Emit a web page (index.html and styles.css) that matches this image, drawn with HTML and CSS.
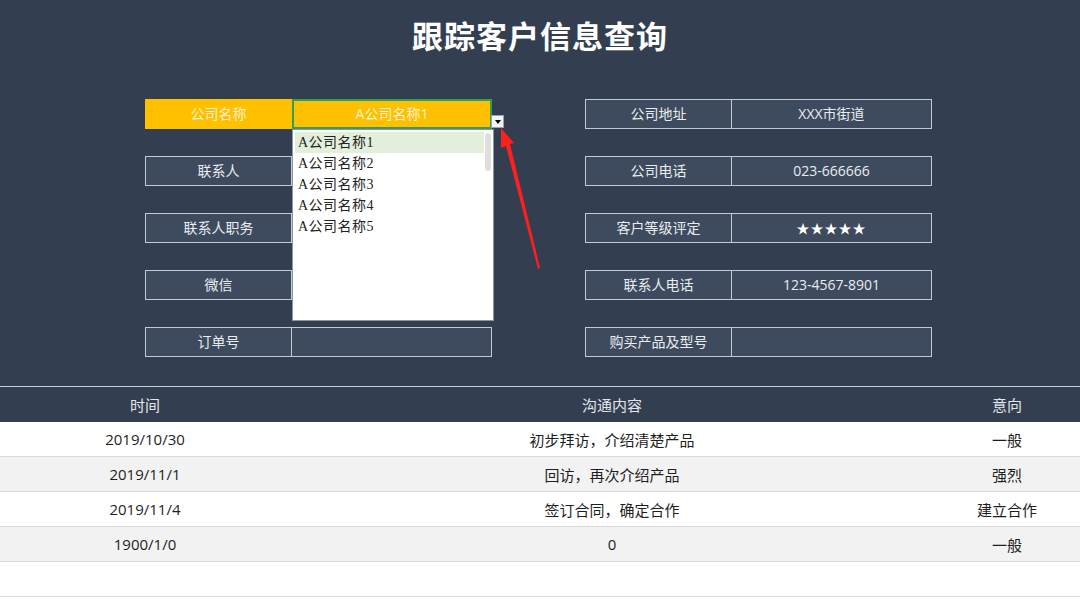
FILE: index.html
```html
<!DOCTYPE html>
<html lang="zh">
<head>
    <meta charset="UTF-8">
    <title>跟踪客户信息查询</title>
    <link rel="stylesheet" href="styles.css">
</head>
<body>
    <div class="top">
        <h1>跟踪客户信息查询</h1>
        <div class="form">
            <div class="group">
                <div class="row active">
                    <div class="label">公司名称</div>
                    <div class="value selected">A公司名称1</div>
                    <div class="drop-btn"></div>
                    <div class="dropdown">
                        <div class="item hl">A公司名称1</div>
                        <div class="item">A公司名称2</div>
                        <div class="item">A公司名称3</div>
                        <div class="item">A公司名称4</div>
                        <div class="item">A公司名称5</div>
                        <div class="scroll"></div>
                    </div>
                </div>
                <div class="row"><div class="label">联系人</div><div class="value"></div></div>
                <div class="row"><div class="label">联系人职务</div><div class="value"></div></div>
                <div class="row"><div class="label">微信</div><div class="value"></div></div>
                <div class="row"><div class="label">订单号</div><div class="value"></div></div>
            </div>
            <div class="group">
                <div class="row"><div class="label">公司地址</div><div class="value">XXX市街道</div></div>
                <div class="row"><div class="label">公司电话</div><div class="value">023-666666</div></div>
                <div class="row"><div class="label">客户等级评定</div><div class="value stars">★★★★★</div></div>
                <div class="row"><div class="label">联系人电话</div><div class="value">123-4567-8901</div></div>
                <div class="row"><div class="label">购买产品及型号</div><div class="value"></div></div>
            </div>
        </div>
        <svg class="arrow" width="60" height="160" viewBox="0 0 60 160">
            <polygon points="7,4 20,19 16,20 46,144 44,145 12,22 7,24" fill="#ff1f1f"/>
        </svg>
    </div>
    <table class="log">
        <thead>
            <tr><th class="c1">时间</th><th class="c2">沟通内容</th><th class="c3">意向</th></tr>
        </thead>
        <tbody>
            <tr><td>2019/10/30</td><td>初步拜访，介绍清楚产品</td><td>一般</td></tr>
            <tr><td>2019/11/1</td><td>回访，再次介绍产品</td><td>强烈</td></tr>
            <tr><td>2019/11/4</td><td>签订合同，确定合作</td><td>建立合作</td></tr>
            <tr><td>1900/1/0</td><td>0</td><td>一般</td></tr>
            <tr><td></td><td></td><td></td></tr>
        </tbody>
    </table>
</body>
</html>
```

FILE: styles.css
```css
body { margin: 0; background: #fff; font-family: "Open Sans", "Noto Sans CJK SC", sans-serif; font-size: 14px; }
.top { position: relative; background: #333f50; height: 386px; border-bottom: 1px solid #c9ced6; overflow: hidden; }
h1 { margin: 0; padding-top: 14px; height: 54px; text-align: center; color: #fff; font-size: 31px; font-weight: bold; line-height: 44px; letter-spacing: 1px; }
.form { display: flex; gap: 93px; padding-left: 145px; margin-top: 31px; }
.group { display: flex; flex-direction: column; gap: 27px; width: 347px; }
.row { position: relative; display: flex; height: 30px; }
.label, .value { box-sizing: border-box; height: 30px; line-height: 28px; text-align: center; color: #e9ecf0; background: #3e4b5e; border: 1px solid #c3cad3; }
.label { width: 147px; }
.value { width: 200px; border-left: none; }
.active .label { background: #ffc000; border-color: #ffc000; color: #fff4d4; }
.value.selected { background: #ffc000; border: 2px solid #2fa05a; line-height: 26px; color: #fff4d4; }
.stars { font-size: 13px; letter-spacing: 1px; color: #fff; }
.drop-btn { position: absolute; left: 346px; top: 16px; width: 13px; height: 13px; background: #f4f4f4; border: 1px solid #9aa3ad; box-sizing: border-box; }
.drop-btn::after { content: ""; position: absolute; left: 3px; top: 4px; border-left: 3px solid transparent; border-right: 3px solid transparent; border-top: 4px solid #000; }
.dropdown { position: absolute; left: 147px; top: 30px; width: 202px; height: 192px; box-sizing: border-box; background: #fff; border: 1px solid #8e969f; padding: 2px 9px 0 2px; z-index: 2; }
.item { height: 21px; line-height: 21px; padding-left: 3px; color: #222; font-family: "Liberation Serif", "Noto Sans CJK SC", serif; font-size: 14px; letter-spacing: 0.5px; }
.item.hl { background: #e2efda; }
.scroll { position: absolute; right: 2px; top: 3px; width: 6px; height: 38px; background: #dedede; border-radius: 3px; }
.arrow { position: absolute; left: 494px; top: 124px; }
.log { width: 100%; border-collapse: collapse; table-layout: fixed; }
.log th { background: #333f50; color: #e2e6ea; font-weight: normal; height: 35px; padding: 0; font-size: 15px; }
.log td { height: 34px; padding: 0; text-align: center; color: #1e1e1e; font-size: 15px; border-bottom: 1px solid #d9d9d9; }
.log tbody tr:nth-child(even) td { background: #f2f2f2; }
.c1 { width: 290px; }
.c3 { width: 146px; }
```
